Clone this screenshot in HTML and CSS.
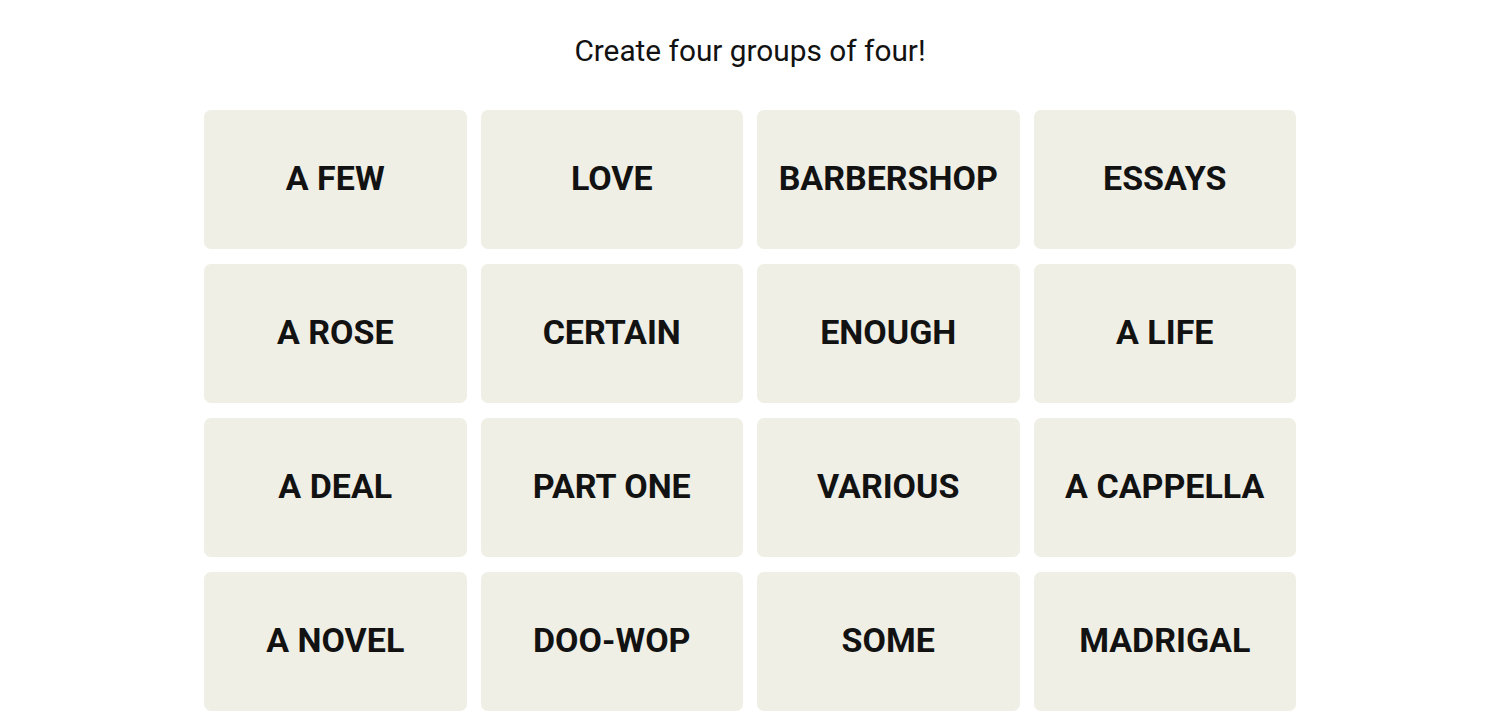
FILE: index.html
```html
<!DOCTYPE html>
<html lang="en">
<head>
  <meta charset="UTF-8">
  <meta name="viewport" content="width=device-width, initial-scale=1.0">
  <title>Connections</title>
  <link rel="stylesheet" href="styles.css">
</head>
<body>
  <div class="game">
    <p class="prompt">Create four groups of four!</p>
    <div class="board">
      <button class="tile">A FEW</button>
      <button class="tile">LOVE</button>
      <button class="tile">BARBERSHOP</button>
      <button class="tile">ESSAYS</button>
      <button class="tile">A ROSE</button>
      <button class="tile">CERTAIN</button>
      <button class="tile">ENOUGH</button>
      <button class="tile">A LIFE</button>
      <button class="tile">A DEAL</button>
      <button class="tile">PART ONE</button>
      <button class="tile">VARIOUS</button>
      <button class="tile">A CAPPELLA</button>
      <button class="tile">A NOVEL</button>
      <button class="tile">DOO-WOP</button>
      <button class="tile">SOME</button>
      <button class="tile">MADRIGAL</button>
    </div>
  </div>
</body>
</html>
```

FILE: styles.css
```css
body {
  margin: 0;
  font-family: Roboto, "Liberation Sans", sans-serif;
  background-color: #fff;
  color: #121212;
}

.game {
  display: flex;
  flex-direction: column;
  align-items: center;
}

.prompt {
  margin: 33px 0 41px;
  font-size: 29.8px;
  line-height: 36px;
  font-weight: 400;
}

.board {
  width: 1092px;
  display: grid;
  grid-template-columns: repeat(4, 1fr);
  grid-auto-rows: 139px;
  column-gap: 14px;
  row-gap: 15px;
}

.tile {
  background-color: #efefe6;
  border: none;
  border-radius: 7px;
  font-family: Roboto, "Liberation Sans", sans-serif;
  font-weight: 700;
  font-size: 34px;
  color: #121212;
  cursor: pointer;
  padding: 0 0 4px;
}
```
